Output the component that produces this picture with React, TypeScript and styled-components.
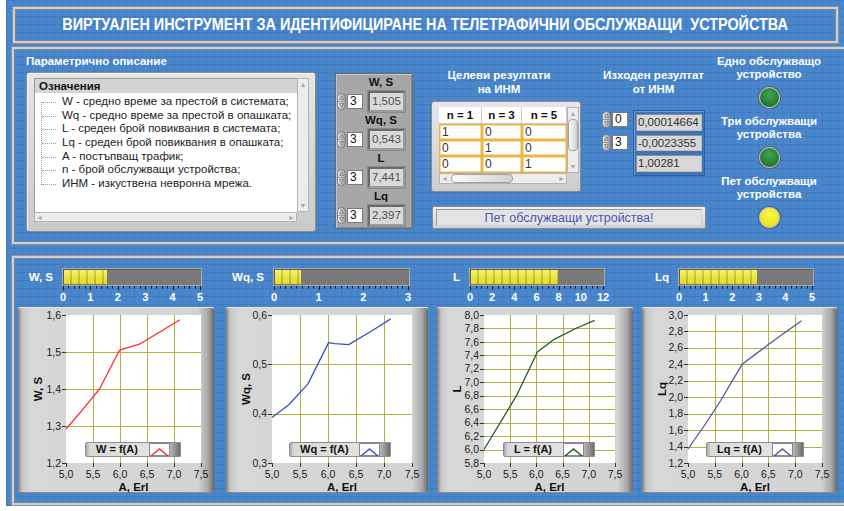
import React from "react";
import styled, { createGlobalStyle, css } from "styled-components";

const GlobalStyle = createGlobalStyle`
  html, body { margin: 0; padding: 0; background: #ffffff; }
  body { font-family: "Liberation Sans", Arial, sans-serif; }
`;

const FONT = `"Liberation Sans", Arial, sans-serif`;

/* ---------- page frame ---------- */

const Screen = styled.div`
  margin-left: 6px;
  width: 838px;
  height: 506px;
  overflow: hidden;
  display: flex;
  flex-direction: column;
  background-color: #4a86cb;
  background-image:
    linear-gradient(rgba(28, 66, 130, 0.14) 1px, transparent 1px),
    linear-gradient(90deg, rgba(28, 66, 130, 0.14) 1px, transparent 1px);
  background-size: 8px 8px;
`;

const groove = css`
  box-sizing: border-box;
  border: 2px solid #ccd0d5;
  box-shadow: inset 0 0 0 1px #7e8893, 0 0 0 1px #8a939c;
`;

const TitleBar = styled.div`
  ${groove};
  margin: 7px 0 0 7px;
  width: 825px;
  height: 36px;
  display: flex;
  align-items: center;
  justify-content: center;
  color: #ffffff;
  font: bold 16px ${FONT};
`;

const TitleText = styled.span`
  display: inline-block;
  white-space: pre;
  transform: scaleX(0.9);
`;

const UpperPanel = styled.div`
  ${groove};
  margin: 4px 0 0 6px;
  width: 842px;
  height: 197px;
  flex: none;
  display: flex;
  align-items: flex-start;
  padding-left: 12px;
`;

const LowerPanel = styled.div`
  ${groove};
  margin: 12px 0 0 6px;
  width: 842px;
  height: 249px;
  flex: none;
  display: flex;
  align-items: flex-start;
  padding: 10px 0 0 4px;
`;

const Caption = styled.div<{ $mt?: number; $w?: number }>`
  margin-top: ${(p) => p.$mt ?? 0}px;
  width: ${(p) => (p.$w ? `${p.$w}px` : "auto")};
  color: #ffffff;
  font: bold 11.5px/14px ${FONT};
  text-align: center;
  white-space: nowrap;
`;

/* ---------- description list ---------- */

const DescColumn = styled.div`
  width: 290px;
  display: flex;
  flex-direction: column;
`;

const DescCaption = styled(Caption)`
  text-align: left;
  margin-top: 5px;
`;

const ListFrame = styled.div`
  margin-top: 4px;
  box-sizing: border-box;
  width: 290px;
  height: 160px;
  padding: 5px 6px 9px 7px;
  border: 1px solid #8c8c8c;
  border-radius: 3px;
  background: linear-gradient(#e6e6e6, #cacaca);
  box-shadow: inset 1px 1px 0 #f6f6f6;
  display: grid;
  grid-template-columns: 1fr 12px;
  grid-template-rows: 1fr 10px;
`;

const ListBody = styled.div`
  background: #ffffff;
  border-top: 1px solid #9a9a9a;
  border-left: 1px solid #9a9a9a;
  overflow: hidden;
`;

const ListHeader = styled.div`
  height: 14px;
  line-height: 14px;
  padding-left: 4px;
  background: #d4d4d4;
  font: bold 11.5px/14px ${FONT};
  color: #111;
`;

const TreeItems = styled.div`
  position: relative;
  padding-top: 2px;
  &::before {
    content: "";
    position: absolute;
    left: 6px;
    top: 9px;
    height: 83px;
    border-left: 1px dotted #9c9c9c;
  }
`;

const TreeItem = styled.div`
  position: relative;
  height: 13.7px;
  line-height: 13.7px;
  padding-left: 27px;
  font: 11.5px/13.7px ${FONT};
  color: #222;
  white-space: nowrap;
  &::before {
    content: "";
    position: absolute;
    left: 7px;
    top: 7px;
    width: 14px;
    border-top: 1px dotted #9c9c9c;
  }
`;

const ScrollTrack = styled.div<{ $dir: "v" | "h" }>`
  background: #ececec;
  border: 1px solid #b4b4b4;
  box-sizing: border-box;
  display: flex;
  flex-direction: ${(p) => (p.$dir === "v" ? "column" : "row")};
  justify-content: space-between;
  align-items: center;
  color: #a8a8a8;
  font-size: 7px;
  line-height: 9px;
  padding: 1px;
`;

const ScrollThumb = styled.div<{ $dir: "v" | "h"; $size: number; $at: number }>`
  ${(p) =>
    p.$dir === "v"
      ? css`
          width: 8px;
          height: ${p.$size}px;
          margin-top: ${p.$at}px;
        `
      : css`
          height: 7px;
          width: ${p.$size}px;
          margin-left: ${p.$at}px;
        `};
  border: 1px solid #a0a0a0;
  border-radius: 4px;
  background: linear-gradient(90deg, #fafafa, #d2d2d2);
`;

const Spacer = styled.div`
  flex: 1;
`;

/* ---------- numeric controls ---------- */

const Cluster = styled.div`
  margin: 24px 0 0 19px;
  box-sizing: border-box;
  width: 78px;
  height: 156px;
  padding: 1px 3px 0 1px;
  background: #a7a7a7;
  border: 1px solid #6c6c6c;
  box-shadow: inset 1px 1px 0 #c6c6c6, inset -1px -1px 0 #8a8a8a;
`;

const ClusterLabel = styled.div`
  height: 14px;
  padding-left: 16px;
  text-align: center;
  font: bold 11.5px/14px ${FONT};
  color: #111;
`;

const ControlRow = styled.div`
  height: 24px;
  display: flex;
  align-items: center;
`;

const SpinSvg = styled.svg`
  flex: none;
  display: block;
`;

const NumBox = styled.div<{ $ml?: number }>`
  box-sizing: border-box;
  margin-left: ${(p) => p.$ml ?? 1}px;
  width: 16px;
  height: 15px;
  background: #ffffff;
  border: 1px solid #7a7a7a;
  font: 12px/13px ${FONT};
  color: #111;
  padding-left: 2px;
`;

const Readout = styled.div`
  box-sizing: border-box;
  margin-left: 5px;
  width: 37px;
  height: 21px;
  background: #d9d9d9;
  border: 2px solid;
  border-color: #6a6a6a #9c9c9c #9c9c9c #6a6a6a;
  box-shadow: 0 0 0 1px #8a8a8a;
  font: 11.5px/17px ${FONT};
  color: #505050;
  padding-left: 2px;
  white-space: nowrap;
`;

/* ---------- targets table & outputs ---------- */

const Middle = styled.div`
  margin-left: 18px;
  width: 276px;
  display: flex;
  flex-direction: column;
`;

const MiddleTop = styled.div`
  display: flex;
`;

const TableColumn = styled.div`
  width: 150px;
  display: flex;
  flex-direction: column;
`;

const TableFrame = styled.div`
  margin-top: 5px;
  box-sizing: border-box;
  width: 150px;
  height: 91px;
  padding: 5px 1px 7px 7px;
  border: 1px solid #8c8c8c;
  border-radius: 3px;
  background: linear-gradient(#e6e6e6, #cdcdcd);
  display: grid;
  grid-template-columns: 128px 12px;
  grid-template-rows: 66px 11px;
`;

const Grid = styled.div`
  display: grid;
  grid-template-columns: 43px 40px 45px;
  grid-template-rows: 17px 16px 16px 17px;
  background: #ffffff;
`;

const HeadCell = styled.div`
  border-right: 1px solid #c8c8c8;
  border-bottom: 1px solid #c8c8c8;
  font: bold 11.5px/16px ${FONT};
  text-align: center;
  color: #111;
`;

const DataCell = styled.div`
  box-shadow: inset 0 0 0 1.5px #ebb445;
  font: 12px/16px ${FONT};
  color: #333;
  padding-left: 3px;
`;

const OutColumn = styled.div`
  margin-left: 21px;
  width: 103px;
  display: flex;
  flex-direction: column;
`;

const OutRow = styled.div`
  margin-top: 14px;
  display: flex;
  align-items: flex-start;
`;

const IndexStack = styled.div`
  margin-top: 2px;
  width: 27px;
  display: flex;
  flex-direction: column;
  gap: 8px;
`;

const IndexRow = styled.div`
  display: flex;
  align-items: center;
  height: 15px;
`;

const ArrayFrame = styled.div`
  box-sizing: border-box;
  margin-left: 4px;
  width: 72px;
  height: 66px;
  padding: 3px 2px;
  background: #3f74b6;
  border: 1px solid #2d5e9c;
  box-shadow: inset 1px 1px 0 #6a9ad6;
  display: flex;
  flex-direction: column;
  gap: 4px;
`;

const ArrayCell = styled.div`
  box-sizing: border-box;
  height: 17px;
  background: #d7d7d7;
  border: 1px solid #8e8e8e;
  border-right-color: #bdbdbd;
  border-bottom-color: #bdbdbd;
  font: 11.5px/15px ${FONT};
  color: #333;
  padding-left: 1px;
  white-space: nowrap;
  overflow: hidden;
`;

const StatusBar = styled.div`
  margin: 14px 0 0 1px;
  box-sizing: border-box;
  width: 274px;
  height: 23px;
  padding: 2px 3px;
  border: 1px solid #8a8a8a;
  border-radius: 2px;
  background: linear-gradient(#f0f0f0, #d0d0d0);
`;

const StatusField = styled.div`
  height: 100%;
  box-sizing: border-box;
  background: #e3e3e3;
  border: 1px solid #9a9a9a;
  border-right-color: #d2d2d2;
  border-bottom-color: #d2d2d2;
  text-align: center;
  font: 12.5px/16px ${FONT};
  color: #4b57b3;
`;

/* ---------- indicators ---------- */

const LedColumn = styled.div`
  width: 124px;
  display: flex;
  flex-direction: column;
  align-items: center;
  padding-top: 6px;
`;

const LedCaption = styled.div<{ $mt: number }>`
  margin-top: ${(p) => p.$mt}px;
  color: #ffffff;
  font: bold 11.5px/13px ${FONT};
  text-align: center;
  white-space: nowrap;
`;

const Led = styled.div<{ $on: "green" | "yellow" }>`
  margin-top: 6px;
  box-sizing: border-box;
  width: 21px;
  height: 21px;
  border-radius: 50%;
  border: 1px solid #c8ccd0;
  box-shadow: 0 0 0 1px #5a6470;
  background: ${(p) =>
    p.$on === "green"
      ? "radial-gradient(circle at 50% 35%, #43a653 0%, #2a8238 55%, #17591f 100%)"
      : "radial-gradient(circle at 50% 35%, #fbf64a 0%, #efe628 60%, #cfc417 100%)"};
`;

/* ---------- charts ---------- */

const ChartColumn = styled.div<{ $gap: number; $w: number }>`
  margin-left: ${(p) => p.$gap}px;
  width: ${(p) => p.$w}px;
  display: flex;
  flex-direction: column;
`;

const MeterRow = styled.div`
  display: flex;
  align-items: center;
  height: 18px;
`;

const MeterLabel = styled.div<{ $w: number }>`
  width: ${(p) => p.$w}px;
  margin-right: 9px;
  text-align: right;
  color: #ffffff;
  font: bold 11.5px/18px ${FONT};
  white-space: nowrap;
`;

const Meter = styled.div<{ $w: number }>`
  box-sizing: border-box;
  width: ${(p) => p.$w}px;
  height: 18px;
  padding: 1px;
  background: #7a7a7a;
  border: 1px solid #a9a9a9;
  box-shadow: inset 1px 1px 0 #5c5c5c;
  display: flex;
`;

const MeterFill = styled.div`
  height: 100%;
  background:
    linear-gradient(rgba(255, 255, 255, 0.25), rgba(120, 110, 0, 0.15)),
    repeating-linear-gradient(90deg, #f3ee2f 0 6.5px, #c4bd1f 6.5px 8px);
`;

const ScaleSvg = styled.svg<{ $ml: number }>`
  display: block;
  margin-left: ${(p) => p.$ml}px;
`;

const Card = styled.div<{ $w: number }>`
  position: relative;
  margin-top: 3px;
  width: ${(p) => p.$w}px;
  height: 186px;
  border-radius: 2px;
  background: linear-gradient(
    90deg,
    #7c7c7c 0px,
    #c6c6c6 4px,
    #d7d7d7 12px,
    #d3d3d3 calc(100% - 16px),
    #a9a9a9 calc(100% - 6px),
    #6a6a6a 100%
  );
  box-shadow: inset 0 1px 0 #e6e6e6, inset 0 -1px 0 #8a8a8a;
`;

const PlotSvg = styled.svg`
  display: block;
  font-family: ${FONT};
`;

const Legend = styled.div<{ $left: number; $w: number }>`
  position: absolute;
  left: ${(p) => p.$left}px;
  top: 135px;
  width: ${(p) => p.$w}px;
  height: 15px;
  box-sizing: border-box;
  display: flex;
  align-items: center;
  border: 1px solid #8e8e8e;
  border-radius: 2px 0 0 2px;
  background: linear-gradient(90deg, #a8a8a8 0, #dadada 4px, #e2e2e2 70%, #c8c8c8 100%);
`;

const LegendText = styled.div`
  flex: 1;
  padding-left: 10px;
  font: bold 11px/13px ${FONT};
  color: #111;
  white-space: nowrap;
`;

const Swatch = styled.div`
  box-sizing: border-box;
  width: 21px;
  height: 13px;
  background: #ffffff;
  border: 1px solid #8a8a8a;
`;

const LegendCap = styled.div`
  width: 10px;
  height: 100%;
  background: linear-gradient(90deg, #b8b8b8, #6e6e6e);
`;

/* ---------- data ---------- */

type Pt = [number, number];

interface ChartSpec {
  id: string;
  label: string;
  scaleMax: number;
  scaleStep: number;
  minor: number;
  gap: number;
  cardWidth: number;
  barOffset: number;
  barWidth: number;
  plotLeft: number;
  plotWidth: number;
  yMin: number;
  yMax: number;
  yStep: number;
  yTitle: string;
  color: string;
  legend: string;
  legendLeft: number;
  legendWidth: number;
  data: Pt[];
}

const charts: ChartSpec[] = [
  {
    id: "w",
    label: "W, S",
    scaleMax: 5,
    scaleStep: 1,
    minor: 5,
    gap: 0,
    cardWidth: 196,
    barOffset: 44,
    barWidth: 140,
    plotLeft: 48,
    plotWidth: 135,
    yMin: 1.2,
    yMax: 1.6,
    yStep: 0.1,
    yTitle: "W, S",
    color: "#ff2b2b",
    legend: "W = f(A)",
    legendLeft: 67,
    legendWidth: 96,
    data: [
      [5.0, 1.292],
      [5.3, 1.343],
      [5.62, 1.4],
      [5.99, 1.505],
      [6.36, 1.521],
      [6.79, 1.559],
      [7.11, 1.587],
    ],
  },
  {
    id: "wq",
    label: "Wq, S",
    scaleMax: 3,
    scaleStep: 1,
    minor: 8,
    gap: 12,
    cardWidth: 202,
    barOffset: 47,
    barWidth: 137,
    plotLeft: 46,
    plotWidth: 140,
    yMin: 0.3,
    yMax: 0.6,
    yStep: 0.1,
    yTitle: "Wq, S",
    color: "#3552c4",
    legend: "Wq = f(A)",
    legendLeft: 63,
    legendWidth: 102,
    data: [
      [5.0, 0.392],
      [5.3, 0.418],
      [5.64, 0.46],
      [6.01, 0.544],
      [6.12, 0.542],
      [6.37, 0.54],
      [6.8, 0.569],
      [7.12, 0.592],
    ],
  },
  {
    id: "l",
    label: "L",
    scaleMax: 12,
    scaleStep: 2,
    minor: 4,
    gap: 9,
    cardWidth: 196,
    barOffset: 32,
    barWidth: 136,
    plotLeft: 47,
    plotWidth: 131,
    yMin: 5.8,
    yMax: 8.0,
    yStep: 0.2,
    yTitle: "L",
    color: "#1f5a2d",
    legend: "L = f(A)",
    legendLeft: 66,
    legendWidth: 92,
    data: [
      [5.0, 6.0],
      [5.62, 6.8],
      [6.02, 7.45],
      [6.32, 7.63],
      [6.75, 7.8],
      [7.11, 7.92],
    ],
  },
  {
    id: "lq",
    label: "Lq",
    scaleMax: 5,
    scaleStep: 1,
    minor: 5,
    gap: 9,
    cardWidth: 195,
    barOffset: 36,
    barWidth: 136,
    plotLeft: 46,
    plotWidth: 134,
    yMin: 1.2,
    yMax: 3.0,
    yStep: 0.2,
    yTitle: "Lq",
    color: "#55559a",
    legend: "Lq = f(A)",
    legendLeft: 64,
    legendWidth: 98,
    data: [
      [5.0, 1.37],
      [5.3, 1.65],
      [5.61, 1.96],
      [6.01, 2.4],
      [6.5, 2.64],
      [6.75, 2.76],
      [7.12, 2.93],
    ],
  },
];

const legendItems = [
  "W - средно време за престой в системата;",
  "Wq - средно време за престой в опашката;",
  "L - среден брой повиквания в системата;",
  "Lq - среден брой повиквания в опашката;",
  "A - постъпващ трафик;",
  "n - брой обслужващи устройства;",
  "ИНМ - изкуствена невронна мрежа.",
];

const readouts = [
  { label: "W, S", value: "1,505" },
  { label: "Wq, S", value: "0,543" },
  { label: "L", value: "7,441" },
  { label: "Lq", value: "2,397" },
];

const targets = [
  ["1", "0", "0"],
  ["0", "1", "0"],
  ["0", "0", "1"],
];

const comma = (v: number, d: number) => v.toFixed(d).replace(".", ",");

/* ---------- drawings ---------- */

function Spinner() {
  return (
    <SpinSvg width="9" height="17" viewBox="0 0 9 17">
      <defs>
        <linearGradient id="spinFace" x1="0" x2="1" y1="0" y2="0">
          <stop offset="0" stopColor="#f2f2f2" />
          <stop offset="1" stopColor="#9c9c9c" />
        </linearGradient>
      </defs>
      <rect x="0.5" y="0.5" width="8" height="16" rx="4" fill="url(#spinFace)" stroke="#7c7c7c" />
      <line x1="1" y1="8.5" x2="8" y2="8.5" stroke="#9a9a9a" />
      <path d="M4.5 2.6 L6.6 6.4 L2.4 6.4 Z" fill="none" stroke="#7a7a7a" strokeWidth="0.8" />
      <path d="M4.5 14.4 L6.6 10.6 L2.4 10.6 Z" fill="none" stroke="#7a7a7a" strokeWidth="0.8" />
    </SpinSvg>
  );
}

function MeterScale({ s }: { s: ChartSpec }) {
  const pad = 8;
  const span = s.barWidth - 3;
  const px = (v: number) => pad + 1 + (v / s.scaleMax) * span;
  const majors = Math.round(s.scaleMax / s.scaleStep);
  const ticks: React.ReactNode[] = [];
  for (let m = 0; m <= majors * s.minor; m++) {
    const v = (m / s.minor) * s.scaleStep;
    const x = Math.round(px(v)) + 0.5;
    const major = m % s.minor === 0;
    ticks.push(
      <line key={`t${m}`} x1={x} x2={x} y1={0} y2={major ? 4 : 2.5} stroke="#1b1b1b" strokeWidth={1} />
    );
  }
  const labels = Array.from({ length: majors + 1 }, (_, i) => i * s.scaleStep);
  return (
    <ScaleSvg $ml={s.barOffset - pad} width={s.barWidth + pad * 2} height={18}>
      {ticks}
      {labels.map((v) => (
        <text
          key={v}
          x={px(v)}
          y={15}
          textAnchor="middle"
          fill="#ffffff"
          fontSize="11"
          fontWeight="bold"
          fontFamily={FONT}
        >
          {v}
        </text>
      ))}
    </ScaleSvg>
  );
}

function Plot({ s }: { s: ChartSpec }) {
  const top = 8;
  const h = 148;
  const X = (a: number) => s.plotLeft + ((a - 5) / 2.5) * s.plotWidth;
  const Y = (v: number) => top + ((s.yMax - v) / (s.yMax - s.yMin)) * h;
  const xs = [5, 5.5, 6, 6.5, 7, 7.5];
  const n = Math.round((s.yMax - s.yMin) / s.yStep);
  const ys = Array.from({ length: n + 1 }, (_, i) => s.yMin + i * s.yStep);
  const crisp = (v: number) => Math.round(v) + 0.5;
  const pts = s.data.map(([a, v]) => `${X(a).toFixed(1)},${Y(v).toFixed(1)}`).join(" ");
  return (
    <PlotSvg width={s.cardWidth} height={186}>
      <rect x={s.plotLeft} y={top} width={s.plotWidth} height={h} fill="#ffffff" />
      {xs.slice(1, -1).map((a) => (
        <line key={`gx${a}`} x1={crisp(X(a))} x2={crisp(X(a))} y1={top} y2={top + h} stroke="#b7af42" />
      ))}
      {ys.slice(1, -1).map((v) => (
        <line
          key={`gy${v}`}
          x1={s.plotLeft}
          x2={s.plotLeft + s.plotWidth}
          y1={crisp(Y(v))}
          y2={crisp(Y(v))}
          stroke="#b7af42"
        />
      ))}
      {ys.map((v) => (
        <g key={`ly${v}`}>
          <line
            x1={s.plotLeft - 4}
            x2={s.plotLeft}
            y1={crisp(Y(v))}
            y2={crisp(Y(v))}
            stroke="#333"
          />
          <text x={s.plotLeft - 5} y={Y(v) + 3.6} textAnchor="end" fontSize="10.5" fill="#222">
            {comma(v, 1)}
          </text>
        </g>
      ))}
      {xs.map((a) => (
        <g key={`lx${a}`}>
          <line x1={crisp(X(a))} x2={crisp(X(a))} y1={top + h} y2={top + h + 4} stroke="#333" />
          <text x={X(a)} y={171} textAnchor="middle" fontSize="10.5" fill="#222">
            {comma(a, 1)}
          </text>
        </g>
      ))}
      <text
        x={s.plotLeft + s.plotWidth / 2}
        y={184}
        textAnchor="middle"
        fontSize="11.5"
        fontWeight="bold"
        fill="#111"
      >
        A, Erl
      </text>
      <text
        transform={`translate(24 ${top + h / 2}) rotate(-90)`}
        textAnchor="middle"
        fontSize="11.5"
        fontWeight="bold"
        fill="#111"
      >
        {s.yTitle}
      </text>
      <polyline points={pts} fill="none" stroke={s.color} strokeWidth={1.3} strokeLinejoin="round" />
    </PlotSvg>
  );
}

function ChartBlock({ s }: { s: ChartSpec }) {
  const last = s.data[s.data.length - 1][1];
  const fill = Math.min(1, last / s.scaleMax);
  return (
    <ChartColumn $gap={s.gap} $w={s.cardWidth}>
      <MeterRow>
        <MeterLabel $w={s.barOffset - 9}>{s.label}</MeterLabel>
        <Meter $w={s.barWidth}>
          <MeterFill style={{ width: `${(fill * 100).toFixed(1)}%` }} />
        </Meter>
      </MeterRow>
      <MeterScale s={s} />
      <Card $w={s.cardWidth}>
        <Plot s={s} />
        <Legend $left={s.legendLeft} $w={s.legendWidth}>
          <LegendText>{s.legend}</LegendText>
          <Swatch>
            <svg width="19" height="11" viewBox="0 0 19 11">
              <polyline points="1,9 9.5,2 18,9" fill="none" stroke={s.color} strokeWidth="1.4" />
            </svg>
          </Swatch>
          <LegendCap />
        </Legend>
      </Card>
    </ChartColumn>
  );
}

export default function App() {
  return (
    <>
      <GlobalStyle />
      <Screen>
        <TitleBar>
          <TitleText>{"ВИРТУАЛЕН ИНСТРУМЕНТ ЗА ИДЕНТИФИЦИРАНЕ НА ТЕЛЕТРАФИЧНИ ОБСЛУЖВАЩИ  УСТРОЙСТВА"}</TitleText>
        </TitleBar>

        <UpperPanel>
          <DescColumn>
            <DescCaption>Параметрично описание</DescCaption>
            <ListFrame>
              <ListBody>
                <ListHeader>Означения</ListHeader>
                <TreeItems>
                  {legendItems.map((t) => (
                    <TreeItem key={t}>{t}</TreeItem>
                  ))}
                </TreeItems>
              </ListBody>
              <ScrollTrack $dir="v">
                <span>▲</span>
                <Spacer />
                <span>▼</span>
              </ScrollTrack>
              <ScrollTrack $dir="h">
                <span>◄</span>
                <Spacer />
                <span>►</span>
              </ScrollTrack>
              <div />
            </ListFrame>
          </DescColumn>

          <Cluster>
            {readouts.map((r) => (
              <React.Fragment key={r.label}>
                <ClusterLabel>{r.label}</ClusterLabel>
                <ControlRow>
                  <Spinner />
                  <NumBox>3</NumBox>
                  <Readout>{r.value}</Readout>
                </ControlRow>
              </React.Fragment>
            ))}
          </Cluster>

          <Middle>
            <MiddleTop>
              <TableColumn>
                <Caption $mt={19} $w={136}>
                  Целеви резултати
                  <br />
                  на ИНМ
                </Caption>
                <TableFrame>
                  <Grid>
                    <HeadCell>n = 1</HeadCell>
                    <HeadCell>n = 3</HeadCell>
                    <HeadCell>n = 5</HeadCell>
                    {targets.map((row, i) =>
                      row.map((c, j) => <DataCell key={`${i}-${j}`}>{c}</DataCell>)
                    )}
                  </Grid>
                  <ScrollTrack $dir="v">
                    <span>▲</span>
                    <ScrollThumb $dir="v" $size={30} $at={1} />
                    <Spacer />
                    <span>▼</span>
                  </ScrollTrack>
                  <ScrollTrack $dir="h">
                    <span>◄</span>
                    <ScrollThumb $dir="h" $size={60} $at={3} />
                    <Spacer />
                    <span>►</span>
                  </ScrollTrack>
                  <div />
                </TableFrame>
              </TableColumn>

              <OutColumn>
                <Caption $mt={19}>
                  Изходен резултат
                  <br />
                  от ИНМ
                </Caption>
                <OutRow>
                  <IndexStack>
                    <IndexRow>
                      <Spinner />
                      <NumBox $ml={1}>0</NumBox>
                    </IndexRow>
                    <IndexRow>
                      <Spinner />
                      <NumBox $ml={1}>3</NumBox>
                    </IndexRow>
                  </IndexStack>
                  <ArrayFrame>
                    <ArrayCell>0,00014664</ArrayCell>
                    <ArrayCell>-0,0023355</ArrayCell>
                    <ArrayCell>1,00281</ArrayCell>
                  </ArrayFrame>
                </OutRow>
              </OutColumn>
            </MiddleTop>
            <StatusBar>
              <StatusField>Пет обслужващи устройства!</StatusField>
            </StatusBar>
          </Middle>

          <LedColumn>
            <LedCaption $mt={0}>
              Едно обслужващо
              <br />
              устройство
            </LedCaption>
            <Led $on="green" />
            <LedCaption $mt={7}>
              Три обслужващи
              <br />
              устройства
            </LedCaption>
            <Led $on="green" />
            <LedCaption $mt={7}>
              Пет обслужващи
              <br />
              устройства
            </LedCaption>
            <Led $on="yellow" />
          </LedColumn>
        </UpperPanel>

        <LowerPanel>
          {charts.map((s) => (
            <ChartBlock key={s.id} s={s} />
          ))}
        </LowerPanel>
      </Screen>
    </>
  );
}
